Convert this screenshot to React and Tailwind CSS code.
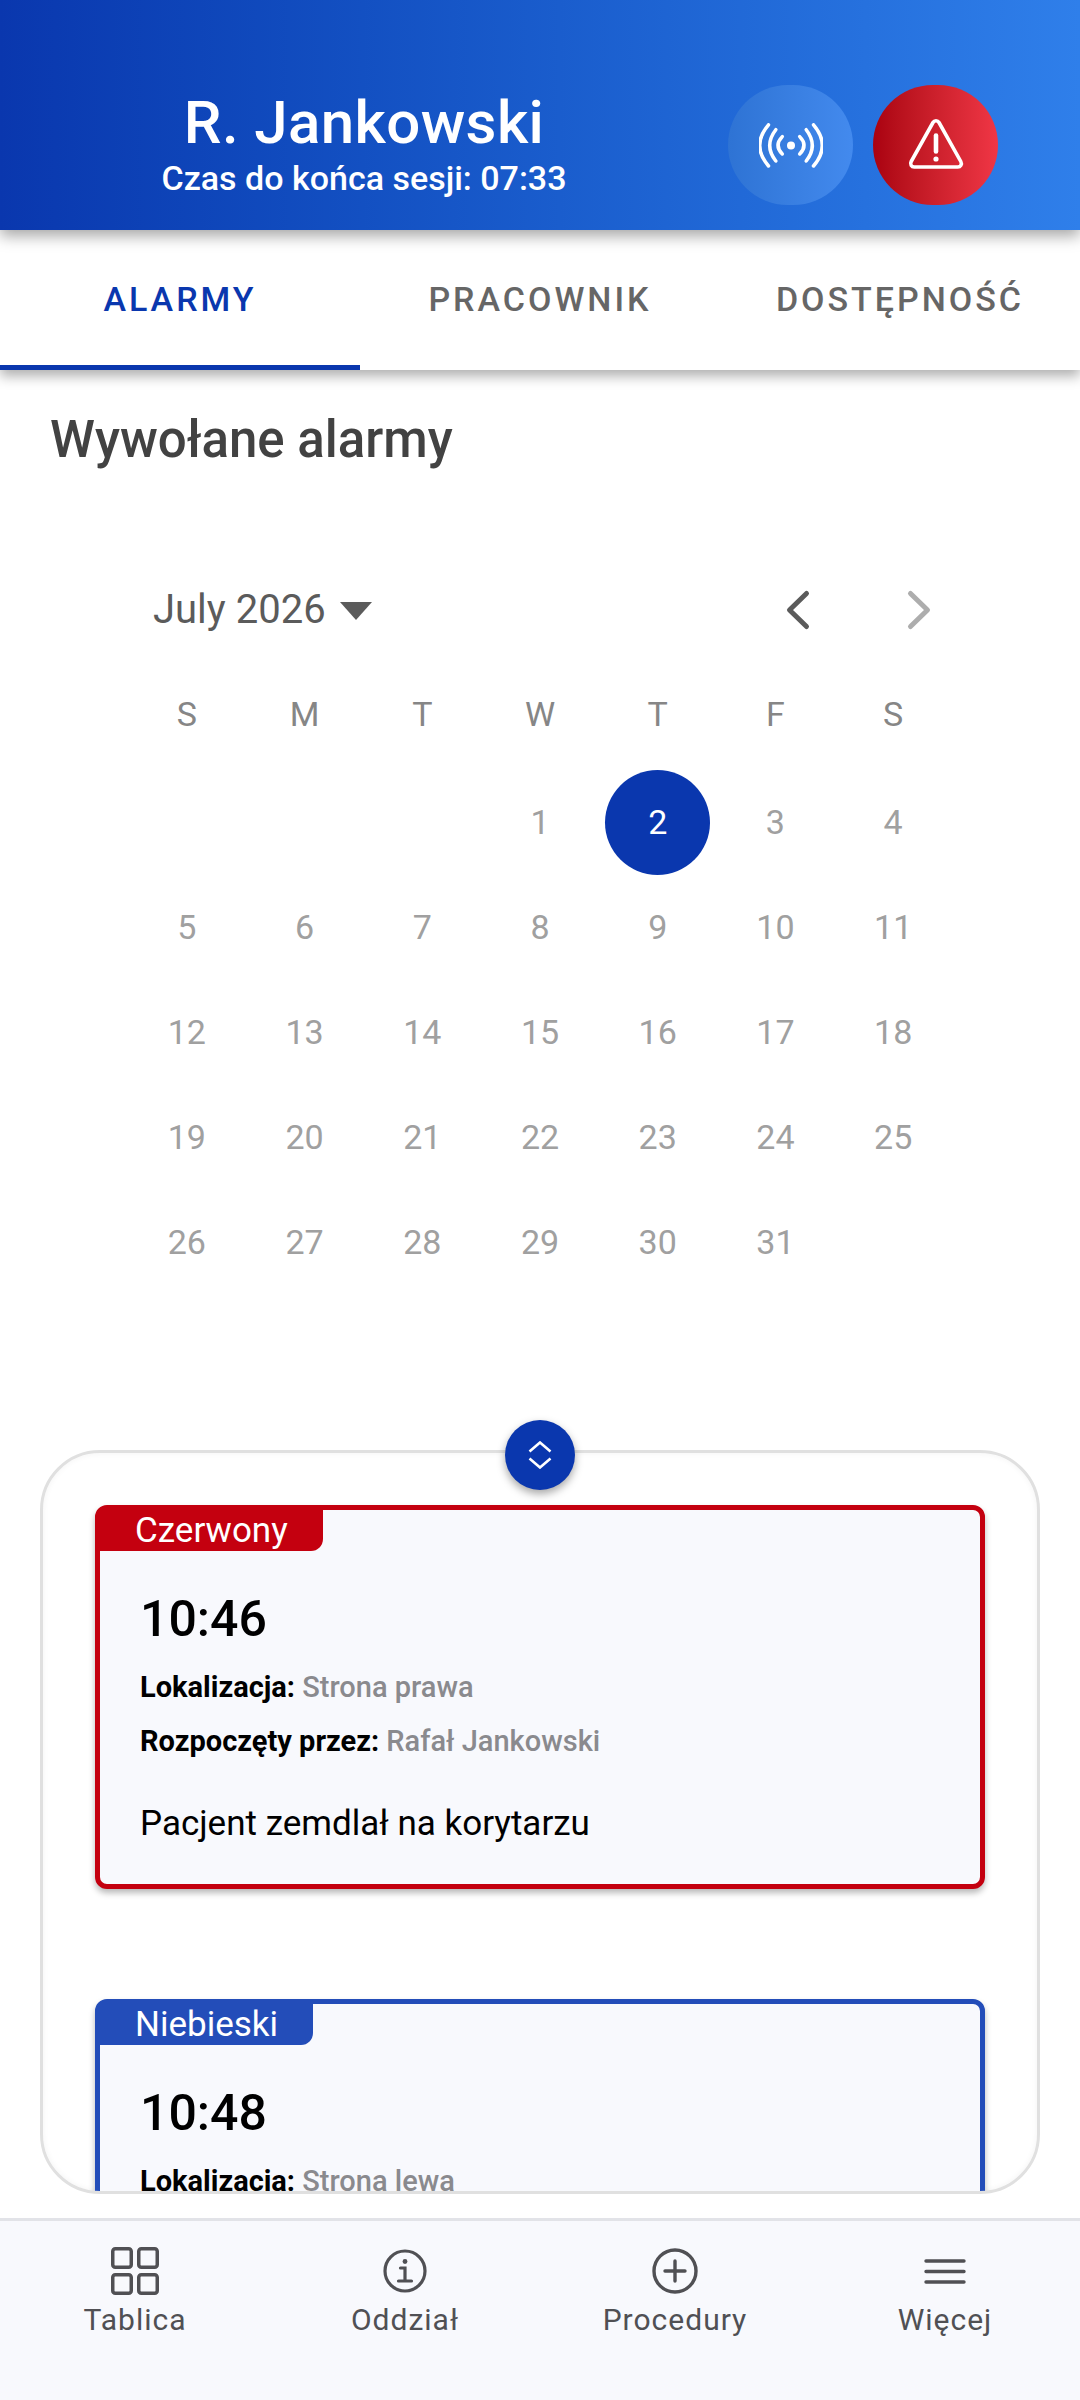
import React from "react";

const weeks = [
  ["", "", "", "1", "2", "3", "4"],
  ["5", "6", "7", "8", "9", "10", "11"],
  ["12", "13", "14", "15", "16", "17", "18"],
  ["19", "20", "21", "22", "23", "24", "25"],
  ["26", "27", "28", "29", "30", "31", ""],
];
const days = ["S", "M", "T", "W", "T", "F", "S"];

function WaveIcon() {
  return (
    <svg width="64" height="45" viewBox="0 0 64 45" fill="none" stroke="white" strokeWidth="3.500" strokeLinecap="round">
      <circle cx="32" cy="22.400" r="4" fill="white" stroke="none" />
      <path d="M23.300 13.600Q14.700 22.400 23.300 31" />
      <path d="M40.700 13.600Q49.300 22.400 40.700 31" />
      <path d="M16.800 6.700Q4.600 22.400 16.800 38" />
      <path d="M47.200 6.700Q59.400 22.400 47.200 38" />
      <path d="M9.500 1.800Q-8.100 22.400 9.500 43" />
      <path d="M54.500 1.800Q72.100 22.400 54.500 43" />
    </svg>
  );
}

function AlertIcon() {
  return (
    <svg width="56" height="52" viewBox="0 0 56 52" fill="none" stroke="white" strokeWidth="3.600" strokeLinejoin="round" strokeLinecap="round" className="-mt-[2px]">
      <path d="M25 4.500 3.200 43.500c-1.500 2.800.3 5.500 3 5.500h43.600c2.700 0 4.500-2.700 3-5.500L31 4.500c-1.400-2.400-4.600-2.400-6 0Z" />
      <path d="M28 17.500v16" strokeWidth="4.600" />
      <circle cx="28" cy="41" r="2.600" fill="white" stroke="none" />
    </svg>
  );
}

function AlarmCard({ color, label, tabWidth, time, place, by, note }) {
  return (
    <div
      className="relative h-[384px] shrink-0 rounded-[12px] border-[5px] bg-[#f8f9fd] shadow-[0_4px_6px_rgba(0,0,0,0.28)]"
      style={{ borderColor: color }}
    >
      <div
        className="absolute left-0 top-0 h-[41px] rounded-br-[12px] pl-[35px] text-[35px] leading-[41px] text-white"
        style={{ backgroundColor: color, width: tabWidth }}
      >
        {label}
      </div>
      <div className="pl-[40px] pt-[81px]">
        <div className="text-[50px] font-medium leading-[56px] text-black">{time}</div>
        <div className="mt-[24px] text-[29px] font-bold leading-[32px] text-black">
          {place[0]} <span className="font-medium text-[#8a8a8e]">{place[1]}</span>
        </div>
        {by && (
          <div className="mt-[22px] text-[29px] font-bold leading-[32px] text-black">
            {by[0]} <span className="font-medium text-[#8a8a8e]">{by[1]}</span>
          </div>
        )}
        {note && <div className="mt-[47px] text-[35px] leading-[40px] text-black">{note}</div>}
      </div>
    </div>
  );
}

function NavItem({ icon, label }) {
  return (
    <div className="flex flex-1 flex-col items-center">
      <div className="flex h-[50px] items-center justify-center">{icon}</div>
      <div className="mt-[6px] text-[30px] leading-[36px] tracking-[1px] text-[#505054]">{label}</div>
    </div>
  );
}

export default function App() {
  return (
    <div className="flex h-[2400px] w-[1080px] flex-col overflow-hidden bg-white font-['Roboto',sans-serif]">
      <header className="relative z-20 flex h-[230px] shrink-0 items-center bg-gradient-to-r from-[#0a37ae] to-[#2f7fea] pt-[60px] shadow-[0_6px_14px_rgba(0,0,0,0.35)]">
        <div className="flex-1 text-center text-white">
          <div className="text-[60px] font-medium leading-[62px] tracking-[0.4px]">R. Jankowski</div>
          <div className="mt-[4px] text-[34px] font-medium leading-[40px]">Czas do końca sesji: 07:33</div>
        </div>
        <div className="mr-[82px] flex gap-[20px]">
          <div className="flex h-[120px] w-[125px] items-center justify-center rounded-full bg-gradient-to-r from-[#2e73d4] to-[#438aee]">
            <WaveIcon />
          </div>
          <div className="flex h-[120px] w-[125px] items-center justify-center rounded-full bg-gradient-to-r from-[#aa0210] to-[#f03645]">
            <AlertIcon />
          </div>
        </div>
      </header>

      <nav className="relative z-10 flex h-[140px] shrink-0 bg-white shadow-[0_6px_12px_rgba(0,0,0,0.32)]">
        {["ALARMY", "PRACOWNIK", "DOSTĘPNOŚĆ"].map((t, i) => (
          <div
            key={t}
            className={
              i === 0
                ? "flex h-full w-[360px] items-center justify-center border-b-[5px] border-[#0a37ae] pt-[4px] text-[34px] font-medium tracking-[3px] text-[#0a37ae]"
                : "flex h-full w-[360px] items-center justify-center border-b-[5px] border-transparent pt-[4px] text-[34px] font-medium tracking-[3px] text-[#666666]"
            }
          >
            {t}
          </div>
        ))}
      </nav>

      <main className="flex min-h-0 flex-1 flex-col">
        <h1 className="ml-[50px] mt-[42px] text-[51px] font-medium leading-[56px] text-[#424242]">Wywołane alarmy</h1>

        <section className="mx-[128px] mt-[117px]">
          <div className="flex h-[50px] items-center justify-between">
            <div className="ml-[25px] flex items-center gap-[14px] text-[40px] leading-[50px] text-[#5b5b5b]">
              <span>July 2026</span>
              <svg width="32" height="20" viewBox="0 0 32 20" className="mt-[2px]">
                <path d="M0 1h32L16 19Z" fill="#5b5b5b" />
              </svg>
            </div>
            <div className="mr-[20px] flex items-center gap-[95px]">
              <svg width="26" height="42" viewBox="0 0 26 42" fill="none" stroke="#5b5b5b" strokeWidth="5" strokeLinecap="round" strokeLinejoin="round">
                <path d="M21.500 4.500 4.500 21l17 16.500" />
              </svg>
              <svg width="26" height="42" viewBox="0 0 26 42" fill="none" stroke="#adadad" strokeWidth="5" strokeLinecap="round" strokeLinejoin="round">
                <path d="m4.500 4.500 17 16.500-17 16.500" />
              </svg>
            </div>
          </div>
          <div className="mt-[59px] grid grid-cols-7 text-center text-[34px] leading-[40px] text-[#868686]">
            {days.map((d, i) => (
              <div key={i}>{d}</div>
            ))}
          </div>
          <div className="mt-[36px] grid grid-cols-7 auto-rows-[105px] text-[34px] text-[#a0a0a0]">
            {weeks.flat().map((d, i) => (
              <div key={i} className="flex items-center justify-center">
                {d === "2" ? (
                  <span className="flex h-[105px] w-[105px] items-center justify-center rounded-full bg-[#0a37ae] text-white">2</span>
                ) : (
                  d
                )}
              </div>
            ))}
          </div>
        </section>

        <section className="relative mx-[40px] mt-[155px] h-[744px] shrink-0 rounded-[60px] border-[3px] border-[#e0e0e0] shadow-[inset_0_0_6px_rgba(0,0,0,0.05)]">
          <div className="absolute left-1/2 top-[-33px] z-10 flex h-[70px] w-[70px] -translate-x-1/2 items-center justify-center rounded-full bg-[#0a37ae] shadow-[0_4px_8px_rgba(0,0,0,0.35)]">
            <svg width="24" height="28" viewBox="0 0 24 28" fill="none" stroke="white" strokeWidth="2.600">
              <path d="m1.500 10.500 10.500-9 10.500 9" />
              <path d="m1.500 17.500 10.500 9 10.500-9" />
            </svg>
          </div>
          <div className="flex h-full flex-col gap-[110px] overflow-hidden rounded-[57px] px-[52px] pt-[52px]">
            <AlarmCard
              color="#c4000f"
              label="Czerwony"
              tabWidth="223px"
              time="10:46"
              place={["Lokalizacja:", "Strona prawa"]}
              by={["Rozpoczęty przez:", "Rafał Jankowski"]}
              note="Pacjent zemdlał na korytarzu"
            />
            <AlarmCard color="#234db9" label="Niebieski" tabWidth="213px" time="10:48" place={["Lokalizacja:", "Strona lewa"]} />
          </div>
        </section>
      </main>

      <footer className="flex h-[182px] shrink-0 border-t-[3px] border-[#e2e3e8] bg-[#f8f9fd] pt-[25px]">
        <NavItem
          label="Tablica"
          icon={
            <svg width="48" height="48" viewBox="0 0 48 48" fill="none" stroke="#505054" strokeWidth="3.500" strokeLinejoin="round">
              <rect x="1.750" y="1.750" width="18.500" height="18.500" rx="2.500" />
              <rect x="27.750" y="1.750" width="18.500" height="18.500" rx="2.500" />
              <rect x="1.750" y="27.750" width="18.500" height="18.500" rx="2.500" />
              <rect x="27.750" y="27.750" width="18.500" height="18.500" rx="2.500" />
            </svg>
          }
        />
        <NavItem
          label="Oddział"
          icon={
            <svg width="44" height="44" viewBox="0 0 44 44" fill="none" stroke="#505054" strokeWidth="3.200">
              <circle cx="22" cy="22" r="20" />
              <circle cx="22" cy="12.500" r="2.400" fill="#505054" stroke="none" />
              <path d="M17.500 19h4.500v13M15.500 32h13" strokeLinecap="round" />
            </svg>
          }
        />
        <NavItem
          label="Procedury"
          icon={
            <svg width="46" height="46" viewBox="0 0 46 46" fill="none" stroke="#505054" strokeWidth="3.400" strokeLinecap="round">
              <circle cx="23" cy="23" r="21" />
              <path d="M23 13v20M13 23h20" />
            </svg>
          }
        />
        <NavItem
          label="Więcej"
          icon={
            <svg width="42" height="25" viewBox="0 0 42 25" fill="none" stroke="#505054" strokeWidth="3.400" strokeLinecap="round">
              <path d="M2 2h38M2 12.500h38M2 23h38" />
            </svg>
          }
        />
      </footer>
    </div>
  );
}
